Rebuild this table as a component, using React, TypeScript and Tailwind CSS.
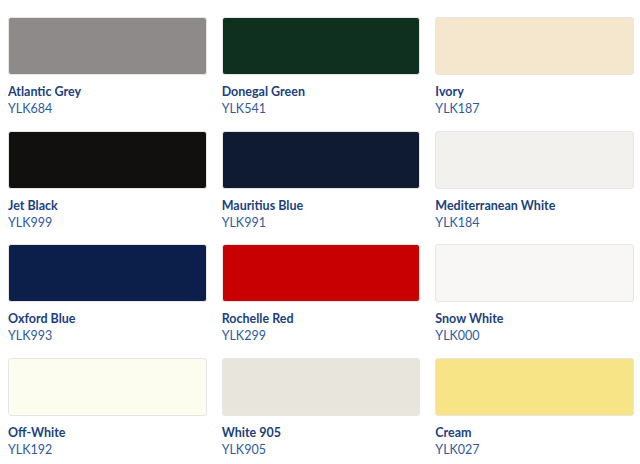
const colours = [
  { name: "Atlantic Grey", code: "YLK684", swatch: "bg-[#8d8a89]" },
  { name: "Donegal Green", code: "YLK541", swatch: "bg-[#10301f]" },
  { name: "Ivory", code: "YLK187", swatch: "bg-[#f5e7cd]" },
  { name: "Jet Black", code: "YLK999", swatch: "bg-[#11100e]" },
  { name: "Mauritius Blue", code: "YLK991", swatch: "bg-[#0f1b32]" },
  { name: "Mediterranean White", code: "YLK184", swatch: "bg-[#f3f1ee]" },
  { name: "Oxford Blue", code: "YLK993", swatch: "bg-[#0c1f4a]" },
  { name: "Rochelle Red", code: "YLK299", swatch: "bg-[#c80002]" },
  { name: "Snow White", code: "YLK000", swatch: "bg-[#f8f7f5]" },
  { name: "Off-White", code: "YLK192", swatch: "bg-[#fdfdef]" },
  { name: "White 905", code: "YLK905", swatch: "bg-[#e8e5dd]" },
  { name: "Cream", code: "YLK027", swatch: "bg-[#f6e486]" },
];

export default function App() {
  return (
    <div className="h-[464px] w-[640px] overflow-hidden bg-white font-['Lato',sans-serif]">
      <div className="grid grid-cols-3 gap-x-[15px] gap-y-[13.7px] pl-2 pr-[6px] pt-[17px]">
        {colours.map((colour) => (
          <div key={colour.code}>
            <div
              className={`h-[58px] rounded-[3px] border border-[#e6e6e3] ${colour.swatch}`}
            />
            <div className="mt-[8px] text-[12.5px] font-bold leading-[17px] text-[#1c3f7e]">
              {colour.name}
            </div>
            <div className="text-[12.5px] leading-[17px] text-[#2f5a9f]">
              {colour.code}
            </div>
          </div>
        ))}
      </div>
    </div>
  );
}
